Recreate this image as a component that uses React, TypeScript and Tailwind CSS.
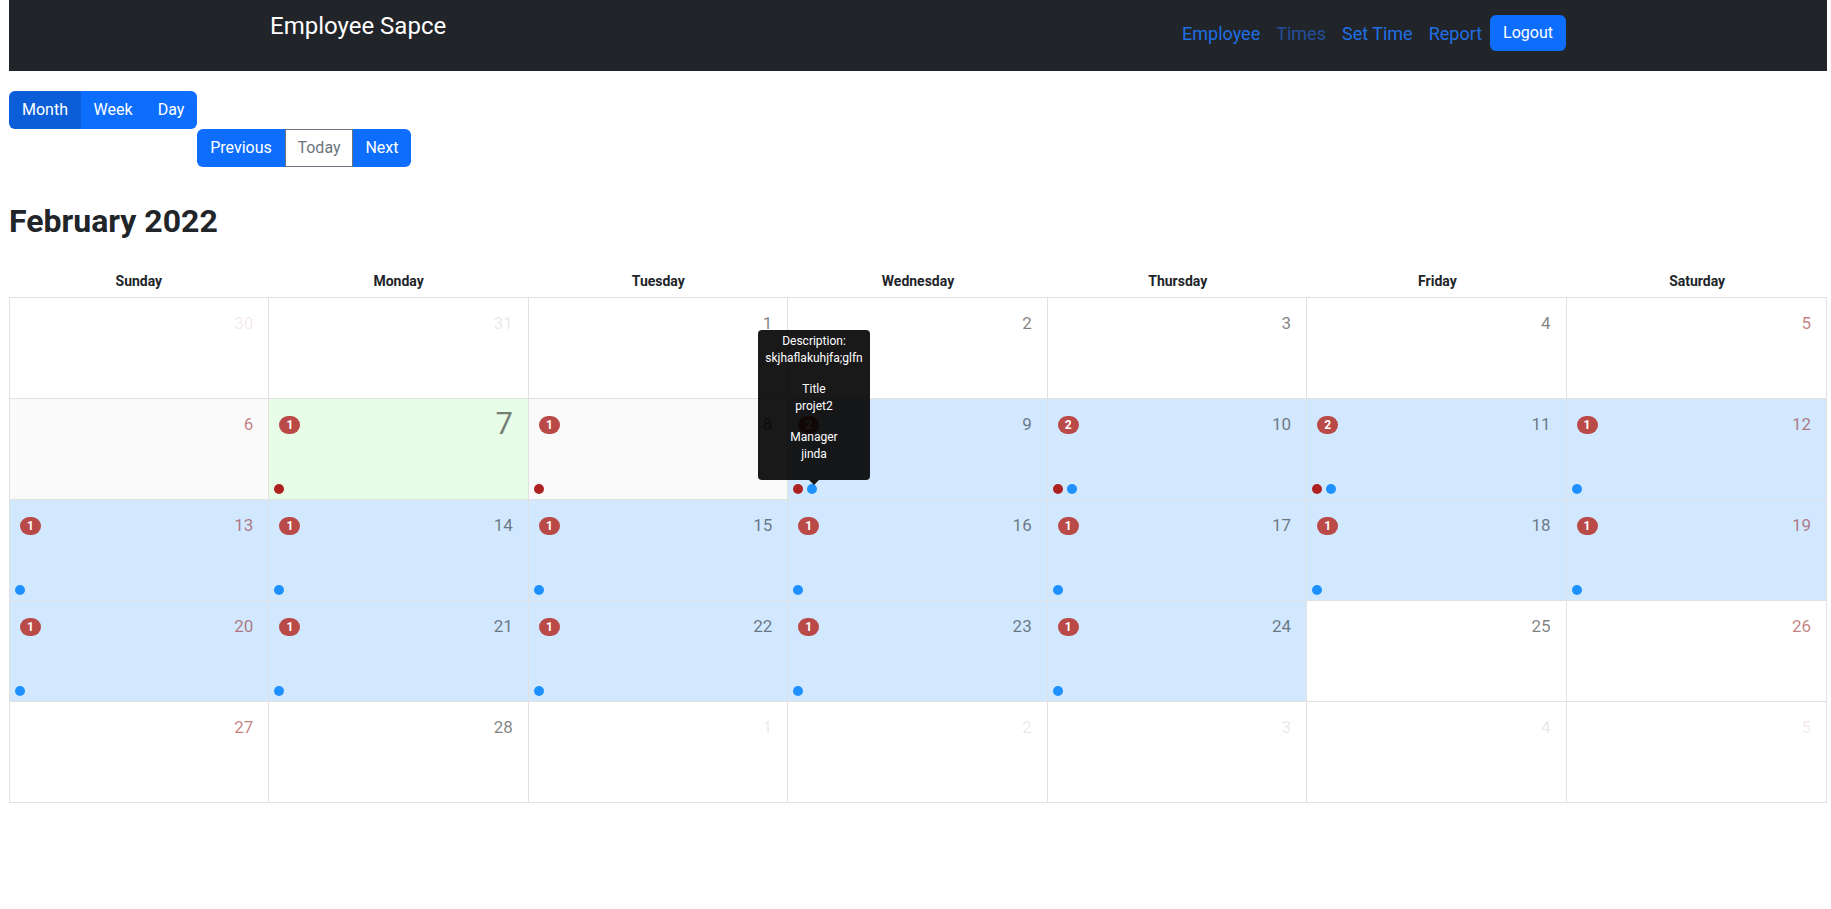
import React from "react";

type Cell = {
  day: number;
  out?: boolean;
  weekend?: boolean;
  today?: boolean;
  bg?: string;
  badge?: number;
  dots?: ("red" | "blue")[];
};

const blue = "bg-[#d1e8ff]";

const weeks: Cell[][] = [
  [
    { day: 30, out: true, weekend: true },
    { day: 31, out: true },
    { day: 1 },
    { day: 2 },
    { day: 3 },
    { day: 4 },
    { day: 5, weekend: true },
  ],
  [
    { day: 6, weekend: true, bg: "bg-[#fafafa]" },
    { day: 7, today: true, bg: "bg-[#e8fde7]", badge: 1, dots: ["red"] },
    { day: 8, bg: "bg-[#fafafa]", badge: 1, dots: ["red"] },
    { day: 9, bg: blue, badge: 2, dots: ["red", "blue"] },
    { day: 10, bg: blue, badge: 2, dots: ["red", "blue"] },
    { day: 11, bg: blue, badge: 2, dots: ["red", "blue"] },
    { day: 12, weekend: true, bg: blue, badge: 1, dots: ["blue"] },
  ],
  [13, 14, 15, 16, 17, 18, 19].map((d, i) => ({
    day: d,
    weekend: i === 0 || i === 6,
    bg: blue,
    badge: 1,
    dots: ["blue"] as ("red" | "blue")[],
  })),
  [
    ...[20, 21, 22, 23, 24].map((d, i) => ({
      day: d,
      weekend: i === 0,
      bg: blue,
      badge: 1,
      dots: ["blue"] as ("red" | "blue")[],
    })),
    { day: 25 },
    { day: 26, weekend: true },
  ],
  [
    { day: 27, weekend: true },
    { day: 28 },
    { day: 1, out: true },
    { day: 2, out: true },
    { day: 3, out: true },
    { day: 4, out: true },
    { day: 5, out: true, weekend: true },
  ],
];

const days = ["Sunday", "Monday", "Tuesday", "Wednesday", "Thursday", "Friday", "Saturday"];

function numberColor(c: Cell) {
  if (c.out) return c.weekend ? "text-[#8b0000]/10" : "text-black/10";
  return c.weekend ? "text-[#8b0000]/50" : "text-black/50";
}

function DayCell({ cell, last }: { cell: Cell; last: boolean }) {
  return (
    <div className={`flex h-[100px] flex-col ${last ? "" : "border-r border-[#e1e1e1]"} ${cell.bg ?? "bg-white"}`}>
      <div className="flex items-start justify-between">
        {cell.badge ? (
          <span className="ml-[10px] mt-[17px] inline-flex h-[18px] min-w-[21px] items-center justify-center rounded-full bg-[#b94a48] px-[6px] text-[12px] font-bold leading-none text-white">
            {cell.badge}
          </span>
        ) : (
          <span />
        )}
        {cell.today ? (
          <span className="mr-[15px] mt-[8px] text-[31px] leading-[34px] text-black/50">{cell.day}</span>
        ) : (
          <span className={`mr-[15px] mt-[15px] text-[17px] leading-5 ${numberColor(cell)}`}>{cell.day}</span>
        )}
      </div>
      <div className="flex-1" />
      <div className="flex pb-[3px] pl-[3px]">
        {(cell.dots ?? []).map((d, i) => (
          <span
            key={i}
            className={`m-[2px] h-[10px] w-[10px] rounded-full ${d === "red" ? "bg-[#ad2121]" : "bg-[#1e90ff]"}`}
          />
        ))}
      </div>
    </div>
  );
}

export default function App() {
  return (
    <div className="min-h-[909px] bg-white font-['Roboto',sans-serif] text-[#212529]">
      <div className="ml-[9px] w-[1818px]">
        {/* navbar */}
        <nav className="h-[71px] bg-[#212529]">
          <div className="mx-auto flex w-[1296px] items-start justify-between">
            <span className="mt-[11px] text-[24px] leading-[30px] text-white">Employee Sapce</span>
            <div className="mt-[15px] flex h-[36px] items-center">
              <a className="px-2 text-[18px] text-[#1f6fe5]">Employee</a>
              <a className="px-2 text-[18px] text-[#234f9c]">Times</a>
              <a className="px-2 text-[18px] text-[#1f6fe5]">Set Time</a>
              <a className="px-2 text-[18px] text-[#1f6fe5]">Report</a>
              <button className="h-[36px] rounded-[6px] bg-[#0d6efd] px-[13px] text-[16px] text-white">Logout</button>
            </div>
          </div>
        </nav>

        {/* view switcher */}
        <div className="mt-[20px] flex h-[38px] w-[188px] overflow-hidden rounded-[6px] text-[16px] text-white">
          <button className="w-[72px] bg-[#0b5ed7]">Month</button>
          <button className="w-[64px] bg-[#0d6efd]">Week</button>
          <button className="w-[52px] bg-[#0d6efd]">Day</button>
        </div>
        <div className="ml-[188px] flex h-[38px] w-[214px] text-[16px]">
          <button className="w-[88px] rounded-l-[6px] bg-[#0d6efd] text-white">Previous</button>
          <button className="w-[68px] border border-[#6c757d] bg-white text-[#6c757d]">Today</button>
          <button className="w-[58px] rounded-r-[6px] bg-[#0d6efd] text-white">Next</button>
        </div>

        <h3 className="mt-[35px] text-[32px] font-bold leading-[38px] text-[#212529]">February 2022</h3>

        {/* weekday header */}
        <div className="mt-[26px] grid h-[31px] grid-cols-7">
          {days.map((d) => (
            <div key={d} className="flex items-center justify-center text-[14px] font-bold text-[#212529]">
              {d}
            </div>
          ))}
        </div>

        {/* month grid */}
        <div className="relative border border-[#e1e1e1]">
          {weeks.map((w, wi) => (
            <div key={wi} className={`grid grid-cols-7 ${wi < weeks.length - 1 ? "border-b border-[#e1e1e1]" : ""}`}>
              {w.map((c, ci) => (
                <DayCell key={ci} cell={c} last={ci === 6} />
              ))}
            </div>
          ))}

          {/* tooltip over the hovered event */}
          <div className="absolute left-[748px] top-[32px] w-[112px] rounded-[4px] bg-black/90 px-1 py-[3px] text-center text-[12px] leading-[17px] text-white">
            <div className="mb-[14px]">
              <div>Description:</div>
              <div>skjhaflakuhjfa;glfn</div>
            </div>
            <div className="mb-[14px]">
              <div>Title</div>
              <div>projet2</div>
            </div>
            <div className="mb-[14px]">
              <div>Manager</div>
              <div>jinda</div>
            </div>
            <span className="absolute left-1/2 top-full -ml-[5px] border-x-[5px] border-t-[5px] border-x-transparent border-t-black/90" />
          </div>
        </div>
      </div>
    </div>
  );
}
